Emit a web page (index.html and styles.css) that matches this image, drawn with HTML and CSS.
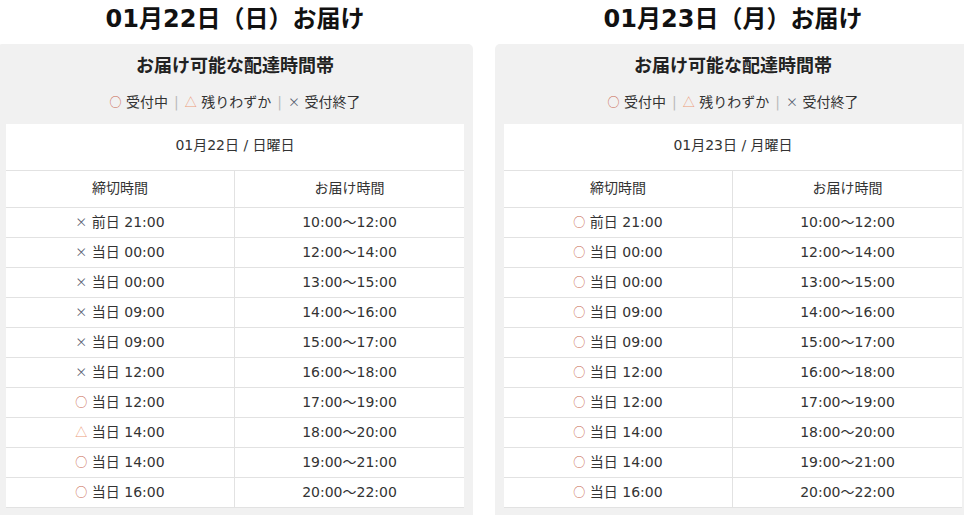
FILE: index.html
```html
<!DOCTYPE html>
<html>
<head>
  <meta charset="UTF-8">
  <meta name="viewport" content="width=device-width, initial-scale=1.0">
  <title>お届け日時</title>
  <link rel="stylesheet" href="styles.css">
</head>
<body>
  <div class="days">
    <section class="day">
      <h2 class="day-title">01月22日（日）お届け</h2>
      <div class="panel">
        <h3 class="panel-title">お届け可能な配達時間帯</h3>
        <p class="legend">
          <span class="mk ok">○</span> 受付中<span class="sep">|</span><span class="mk few">△</span> 残りわずか<span class="sep">|</span><span class="mk ng">×</span> 受付終了
        </p>
        <div class="slots">
          <div class="slot-date">01月22日 / 日曜日</div>
          <div class="slot-row head"><div>締切時間</div><div>お届け時間</div></div>
          <div class="slot-row"><div><span class="mk ng">×</span> 前日 21:00</div><div>10:00～12:00</div></div>
          <div class="slot-row"><div><span class="mk ng">×</span> 当日 00:00</div><div>12:00～14:00</div></div>
          <div class="slot-row"><div><span class="mk ng">×</span> 当日 00:00</div><div>13:00～15:00</div></div>
          <div class="slot-row"><div><span class="mk ng">×</span> 当日 09:00</div><div>14:00～16:00</div></div>
          <div class="slot-row"><div><span class="mk ng">×</span> 当日 09:00</div><div>15:00～17:00</div></div>
          <div class="slot-row"><div><span class="mk ng">×</span> 当日 12:00</div><div>16:00～18:00</div></div>
          <div class="slot-row"><div><span class="mk ok">○</span> 当日 12:00</div><div>17:00～19:00</div></div>
          <div class="slot-row"><div><span class="mk few">△</span> 当日 14:00</div><div>18:00～20:00</div></div>
          <div class="slot-row"><div><span class="mk ok">○</span> 当日 14:00</div><div>19:00～21:00</div></div>
          <div class="slot-row"><div><span class="mk ok">○</span> 当日 16:00</div><div>20:00～22:00</div></div>
        </div>
      </div>
    </section>

    <section class="day">
      <h2 class="day-title">01月23日（月）お届け</h2>
      <div class="panel">
        <h3 class="panel-title">お届け可能な配達時間帯</h3>
        <p class="legend">
          <span class="mk ok">○</span> 受付中<span class="sep">|</span><span class="mk few">△</span> 残りわずか<span class="sep">|</span><span class="mk ng">×</span> 受付終了
        </p>
        <div class="slots">
          <div class="slot-date">01月23日 / 月曜日</div>
          <div class="slot-row head"><div>締切時間</div><div>お届け時間</div></div>
          <div class="slot-row"><div><span class="mk ok">○</span> 前日 21:00</div><div>10:00～12:00</div></div>
          <div class="slot-row"><div><span class="mk ok">○</span> 当日 00:00</div><div>12:00～14:00</div></div>
          <div class="slot-row"><div><span class="mk ok">○</span> 当日 00:00</div><div>13:00～15:00</div></div>
          <div class="slot-row"><div><span class="mk ok">○</span> 当日 09:00</div><div>14:00～16:00</div></div>
          <div class="slot-row"><div><span class="mk ok">○</span> 当日 09:00</div><div>15:00～17:00</div></div>
          <div class="slot-row"><div><span class="mk ok">○</span> 当日 12:00</div><div>16:00～18:00</div></div>
          <div class="slot-row"><div><span class="mk ok">○</span> 当日 12:00</div><div>17:00～19:00</div></div>
          <div class="slot-row"><div><span class="mk ok">○</span> 当日 14:00</div><div>18:00～20:00</div></div>
          <div class="slot-row"><div><span class="mk ok">○</span> 当日 14:00</div><div>19:00～21:00</div></div>
          <div class="slot-row"><div><span class="mk ok">○</span> 当日 16:00</div><div>20:00～22:00</div></div>
        </div>
      </div>
    </section>
  </div>
</body>
</html>
```

FILE: styles.css
```css
body {
  margin: 0;
  font-family: "DejaVu Sans", "Noto Sans CJK JP", sans-serif;
  color: #333;
  background: #fff;
  overflow: hidden;
}
.days {
  display: flex;
  gap: 22px;
  margin-left: -3px;
}
.day {
  width: 476px;
  flex: none;
}
.day-title {
  margin: 0;
  height: 44px;
  line-height: 38px;
  font-size: 24px;
  font-weight: bold;
  text-align: center;
  color: #111;
}
.panel {
  background: #f1f1f1;
  border-radius: 5px 5px 0 0;
  padding: 11px 9px 20px;
}
.panel-title {
  margin: 0;
  height: 22px;
  line-height: 22px;
  font-size: 18px;
  font-weight: bold;
  text-align: center;
  color: #222;
}
.legend {
  margin: 15px 0 12px;
  height: 20px;
  line-height: 20px;
  font-size: 14px;
  text-align: center;
}
.sep {
  color: #bbb;
  margin: 0 6px;
}
.mk {
  font-family: "Noto Sans CJK JP", sans-serif;
  font-size: 12px;
}
.ok { color: #c8664c; }
.few { color: #ec9a78; }
.ng { color: #5b6272; }

.slots {
  background: #fff;
  font-size: 14px;
  border-bottom: 1px solid #e2e2e2;
}
.slot-date {
  height: 46px;
  line-height: 43px;
  text-align: center;
}
.slot-row {
  display: grid;
  grid-template-columns: 228px 1fr;
  border-top: 1px solid #e2e2e2;
  height: 29px;
  line-height: 28px;
  text-align: center;
}
.slot-row > div + div {
  border-left: 1px solid #e2e2e2;
}
.slot-row.head {
  height: 36px;
  line-height: 34px;
}
```
